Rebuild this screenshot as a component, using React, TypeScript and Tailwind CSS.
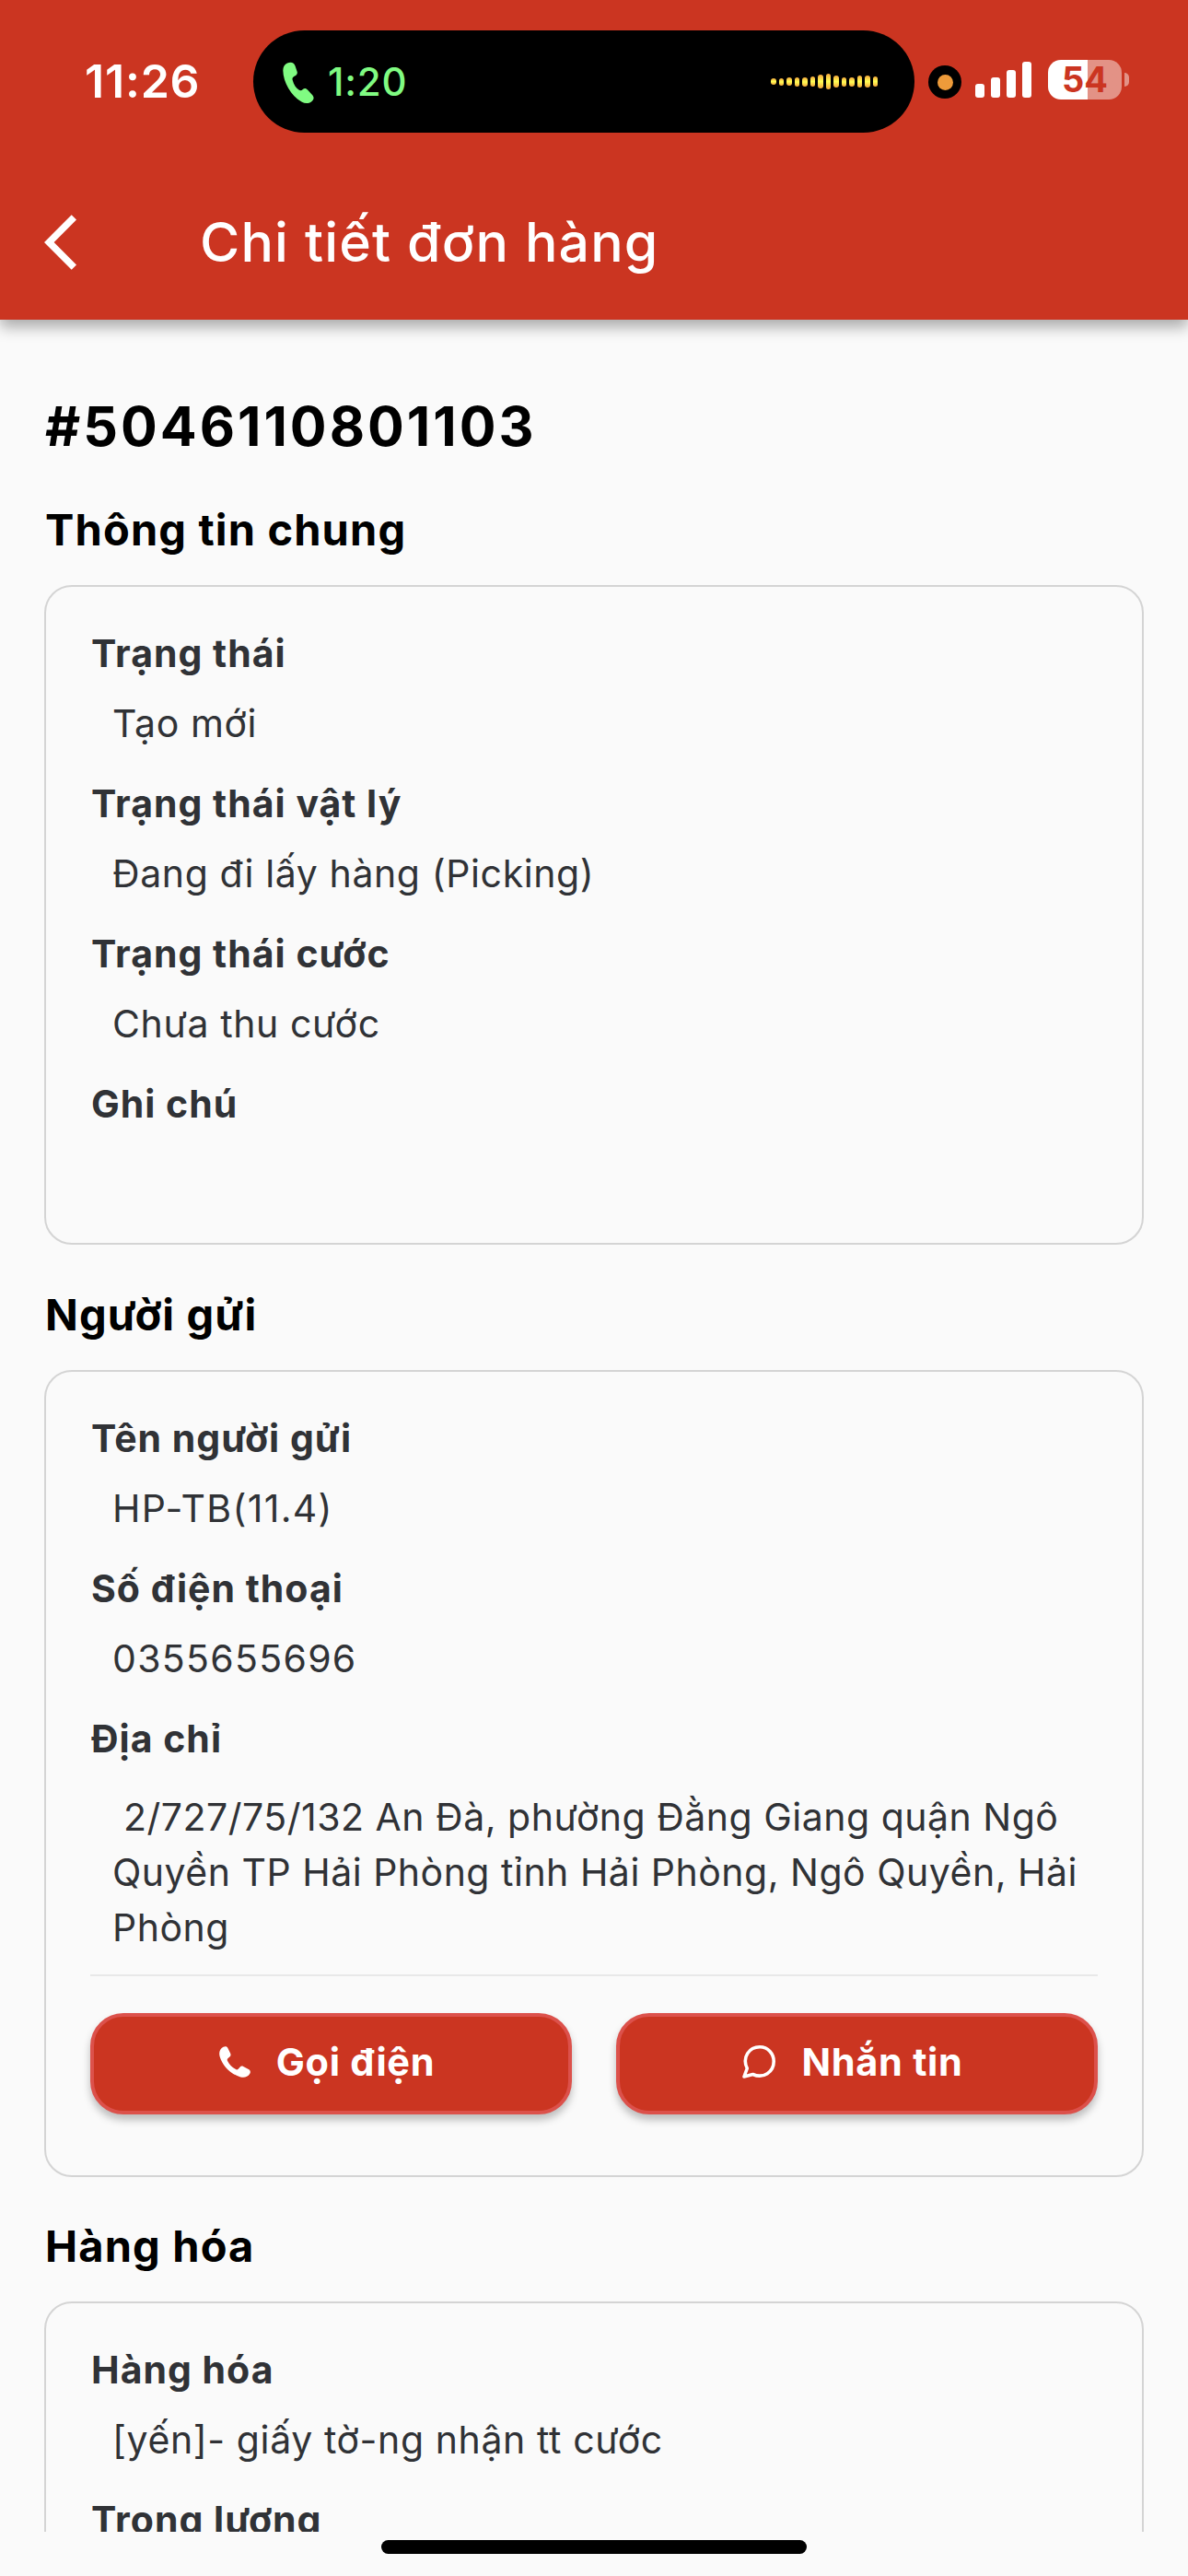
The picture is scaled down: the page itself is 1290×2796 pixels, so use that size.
import React from 'react';

interface Field {
  label: string;
  value: string;
  numeric?: boolean;
}

const GENERAL: Field[] = [
  { label: 'Trạng thái', value: 'Tạo mới' },
  { label: 'Trạng thái vật lý', value: 'Đang đi lấy hàng (Picking)' },
  { label: 'Trạng thái cước', value: 'Chưa thu cước' },
  { label: 'Ghi chú', value: '' },
];

const SENDER: Field[] = [
  { label: 'Tên người gửi', value: 'HP-TB(11.4)', numeric: true },
  { label: 'Số điện thoại', value: '0355655696', numeric: true },
];

const GOODS: Field[] = [
  { label: 'Hàng hóa', value: '[yến]- giấy tờ-ng nhận tt cước' },
  { label: 'Trọng lượng', value: '' },
];

const ADDRESS = ['\u00a02/727/75/132 An Đà, phường Đằng Giang quận Ngô', 'Quyền TP Hải Phòng tỉnh Hải Phòng, Ngô Quyền, Hải', 'Phòng'];

const WAVE = [7, 8, 9, 10, 10, 11, 15, 17, 13, 10, 10, 13, 13, 11];

const PHONE_PATH = 'M3.2 0.6C4.6-.2 6.1.1 6.7 1.5L8.6 5.4C9.1 6.6 8.8 7.5 7.8 8.3L6.6 9.4C6.1 9.9 6 10.5 6.4 11.3 7.8 14 9.9 16.2 12.7 17.7 13.4 18.1 14 18 14.6 17.4L15.7 16.2C16.5 15.3 17.4 15 18.5 15.5L22.5 17.6C23.9 18.3 24.3 19.8 23.4 21.2 21.8 23.6 19.3 24.4 16.4 23.6 8.8 21.4 2.6 15 .4 7.7-.4 4.700 .6 2 3.200 .6Z';

const StatusBar = () => (
  <div className="flex h-[178px] items-start">
    <div className="w-[275px] pt-[58px] pl-[92px] text-[50px] leading-[60px] font-semibold tracking-[0.8px]">11:26</div>
    <div className="mt-[33px] flex h-[111px] w-[718px] items-center rounded-full bg-black pr-[40px] pl-[32px]">
      <svg className="mt-[3px] h-[46px] w-[34px]" viewBox="0 0 34 46" fill="#80fb82">
        <path d="M5 1.500C9-.4 12.500 1 13.500 4.500L15.700 11C16.200 13 15 14.500 13 15.500 11 16.500 10 18 10.700 20 12 25 14.500 28.500 17.500 30.500 19.200 31.600 20.500 31.200 21.500 30.200 23.500 28.300 25.500 28.600 27 30.500L32.500 36.500C34.500 39 33.500 41.800 31 43.500 28 45.500 24 45.500 20.500 43.500 9 37 .5 22 .3 9.500 .4 5.500 2 2.800 5 1.500Z" />
      </svg>
      <span className="ml-[15px] text-[42px] font-medium tracking-[0.8px] text-[#80fb82]">1:20</span>
      <div className="ml-auto flex items-center gap-[3px]">
        {WAVE.map((h, i) => (
          <span key={i} className="w-[5.5px] rounded-full bg-linear-to-b from-[#f5a83c] via-[#feff54] to-[#f5a83c]" style={{ height: h }} />
        ))}
      </div>
    </div>
    <div className="mt-[71px] ml-[15px] flex size-9 items-center justify-center rounded-full bg-black">
      <span className="size-[17px] rounded-full bg-[#ee9b3a]" />
    </div>
    <div className="mt-[67px] ml-[15px] flex h-[39px] items-end gap-[7px]">
      <span className="h-[15px] w-[10px] rounded-[3px] bg-white" />
      <span className="h-[22px] w-[10px] rounded-[3px] bg-white" />
      <span className="h-[30px] w-[10px] rounded-[3px] bg-white" />
      <span className="h-[39px] w-[10px] rounded-[3px] bg-white" />
    </div>
    <div className="mt-[65px] ml-[18px] flex items-center">
      <div className="flex h-[43px] w-[80px] items-center justify-center rounded-[14px] bg-linear-to-r from-white from-54% to-[#e39286] to-54% text-[38px] font-bold text-[#cb3521]">54</div>
      <span className="ml-[3px] h-[15px] w-[5px] rounded-r-full bg-[#e39286]" />
    </div>
  </div>
);

const FieldRow = ({ label, value, numeric }: Field) => (
  <div className="h-[163px]">
    <div className="h-[76px] pl-px text-[41px] leading-[60px] font-bold tracking-[1px]">{label}</div>
    <div className={`pl-6 text-[41px] leading-[60px] ${numeric ? 'tracking-[1.3px]' : 'tracking-[0.6px]'}`}>{value}</div>
  </div>
);

const Section = ({ title, className, children }: { title: string; className: string; children: React.ReactNode }) => (
  <section>
    <h2 className="h-[91px] pl-px text-[47px] leading-[62px] font-bold tracking-[1.15px] text-black">{title}</h2>
    <div className={`rounded-[30px] border-2 border-[#d4d4d4] px-12 pt-[42px] ${className}`}>{children}</div>
  </section>
);

const ActionButton = ({ icon, text }: { icon: React.ReactNode; text: string }) => (
  <button className="flex h-[110px] flex-1 items-center justify-center gap-[28px] rounded-[36px] border-4 border-[#dc514b] bg-[#cb3521] pr-[9px] pb-1 text-[41.5px] font-bold tracking-[0.7px] text-white shadow-[0_6px_9px_rgba(0,0,0,0.25)]">
    {icon}
    <span>{text}</span>
  </button>
);

export default function App() {
  return (
    <div className="flex h-[2796px] w-[1290px] flex-col overflow-hidden bg-[#fafafa] font-['Inter',sans-serif] text-[#303236]">
      <header className="relative z-10 h-[347px] shrink-0 bg-[#cb3521] text-white shadow-[0_8px_15px_rgba(0,0,0,0.32)]">
        <StatusBar />
        <div className="flex h-[170px] items-center pl-[48px]">
          <svg className="size-[72px]" viewBox="0 0 24 24" fill="currentColor">
            <path d="M11.67 3.87L9.9 2.1 0 12l9.9 9.9 1.77-1.77L3.54 12z" />
          </svg>
          <h1 className="ml-[97px] text-[59px] font-medium tracking-[1.15px]">Chi tiết đơn hàng</h1>
        </div>
      </header>

      <main className="h-[2401px] shrink-0 overflow-hidden px-12 pt-[78px]">
        <div className="h-[119px] pl-px text-[59px] leading-[76px] font-bold tracking-[3px] text-black">#5046110801103</div>

        <Section title="Thông tin chung" className="mb-[45px] h-[716px]">
          {GENERAL.map(f => <FieldRow key={f.label} {...f} />)}
        </Section>

        <Section title="Người gửi" className="mb-[44px] h-[876px]">
          {SENDER.map(f => <FieldRow key={f.label} {...f} />)}
          <div className="h-[85px] pl-px text-[41px] leading-[60px] font-bold tracking-[1px]">Địa chỉ</div>
          <div className="h-[203px] border-b-2 border-[#e8e8e8] pl-6 text-[41px] leading-[60px] tracking-[0.5px] whitespace-nowrap">
            {ADDRESS.map(line => <div key={line}>{line}</div>)}
          </div>
          <div className="mt-[40px] flex gap-12">
            <ActionButton
              text="Gọi điện"
              icon={<svg className="size-[34px]" viewBox="0 0 24 24" fill="currentColor"><path d={PHONE_PATH} /></svg>}
            />
            <ActionButton
              text="Nhắn tin"
              icon={
                <svg className="size-[36px]" viewBox="0 0 36 36" fill="none" stroke="currentColor" strokeWidth="3.6" strokeLinejoin="round">
                  <path d="M5.300 25C-.5 13 7.500 1.800 19 1.800 28 1.800 34.200 9 34.200 17.500 34.200 29 23 36.500 11.500 31.500L2 34Z" />
                </svg>
              }
            />
          </div>
        </Section>

        <Section title="Hàng hóa" className="h-[716px]">
          {GOODS.map(f => <FieldRow key={f.label} {...f} />)}
        </Section>
      </main>

      <div className="mx-auto mt-[9px] h-[15px] w-[462px] rounded-full bg-black" />
    </div>
  );
}
